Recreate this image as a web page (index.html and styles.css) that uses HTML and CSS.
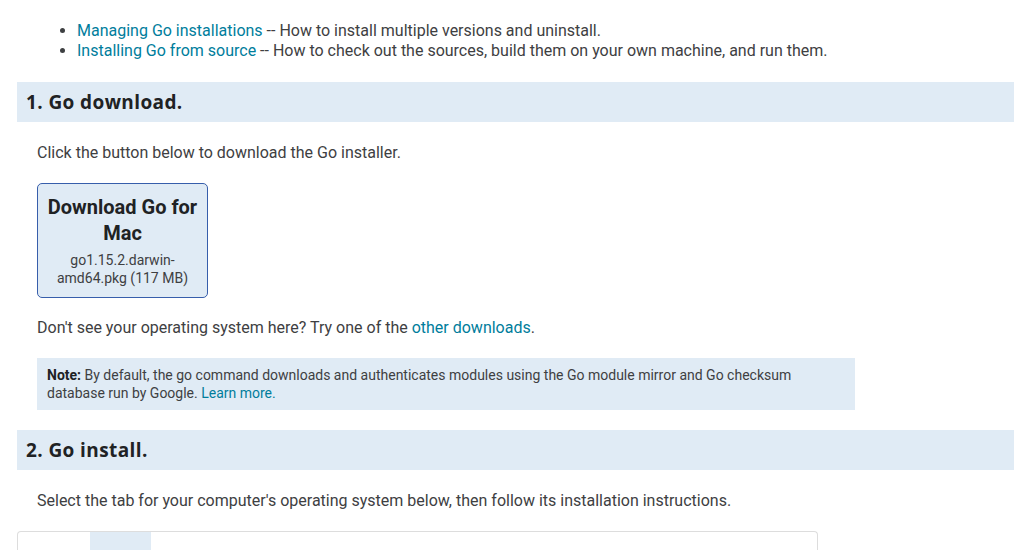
FILE: index.html
```html
<!DOCTYPE html>
<html>
<head>
<meta charset="utf-8">
<link rel="stylesheet" href="styles.css">
</head>
<body>
<main class="article">
  <ul class="links">
    <li><a href="#">Managing Go installations</a> -- How to install multiple versions and uninstall.</li>
    <li><a href="#">Installing Go from source</a> -- How to check out the sources, build them on your own machine, and run them.</li>
  </ul>

  <h2 class="step">1. Go download.</h2>
  <div class="section">
    <p class="text">Click the button below to download the Go installer.</p>
    <a class="download" href="#">
      <span class="download-title">Download Go for Mac</span>
      <span class="download-file">go1.15.2.darwin-amd64.pkg (117 MB)</span>
    </a>
    <p class="text gap">Don't see your operating system here? Try one of the <a href="#">other downloads</a>.</p>
    <div class="note"><b>Note:</b> By default, the go command downloads and authenticates modules using the Go module mirror and Go checksum database run by Google. <a href="#">Learn more.</a></div>
  </div>

  <h2 class="step step-two">2. Go install.</h2>
  <div class="section">
    <p class="text">Select the tab for your computer's operating system below, then follow its installation instructions.</p>
  </div>
  <div class="tabs">
    <div class="tab-row">
      <div class="tab tab-linux"></div>
      <div class="tab tab-mac active"></div>
      <div class="tab tab-windows"></div>
    </div>
  </div>
</main>
</body>
</html>
```

FILE: styles.css
```css
* { box-sizing: border-box; }
html, body { margin: 0; padding: 0; background: #fff; overflow: hidden; }
body {
  font-family: Roboto, "Liberation Sans", Arial, sans-serif;
  font-size: 16px;
  line-height: 20px;
  color: #3e4042;
}
a { color: #007d9c; text-decoration: none; }
.article { padding-left: 17px; height: 550px; overflow: hidden; }
.links { margin: 0; padding: 21px 0 0 60px; }
.links li { line-height: 20px; }
.step {
  margin: 21px 0 0;
  height: 40px;
  background: #e0ebf5;
  padding: 0 0 0 9px;
  font-family: "Open Sans", "Liberation Sans", sans-serif;
  font-weight: 700;
  font-size: 19px;
  letter-spacing: 0.4px;
  line-height: 40px;
  color: #202224;
}
.step-two { margin-top: 20px; }
.section { padding-left: 20px; }
.text { margin: 21px 0 0; }
.text.gap { margin-top: 20px; }
.download {
  display: block;
  width: 171px;
  margin-top: 20px;
  padding: 10px 6px 10px;
  background: #e0ebf5;
  border: 1px solid #375eab;
  border-radius: 5px;
  text-align: center;
  color: #202224;
}
.download-title { display: block; font-size: 20px; line-height: 26px; font-weight: 700; }
.download-file { display: block; margin-top: 5px; font-size: 14px; line-height: 18px; color: #3e4042; }
.note {
  margin-top: 20px;
  width: 818px;
  background: #e0ebf5;
  padding: 8px 20px 8px 10px;
  font-size: 14px;
  line-height: 18px;
}
.note b { color: #202224; }
.tabs {
  margin-top: 20px;
  width: 801px;
  height: 60px;
  border: 1px solid #ddd;
  border-bottom: none;
  border-radius: 4px 4px 0 0;
}
.tab-row { display: flex; height: 100%; }
.tab { height: 100%; }
.tab-linux { width: 72px; }
.tab-mac { width: 61px; }
.tab-windows { width: 80px; }
.tab.active { background: #e0ebf5; }
```
